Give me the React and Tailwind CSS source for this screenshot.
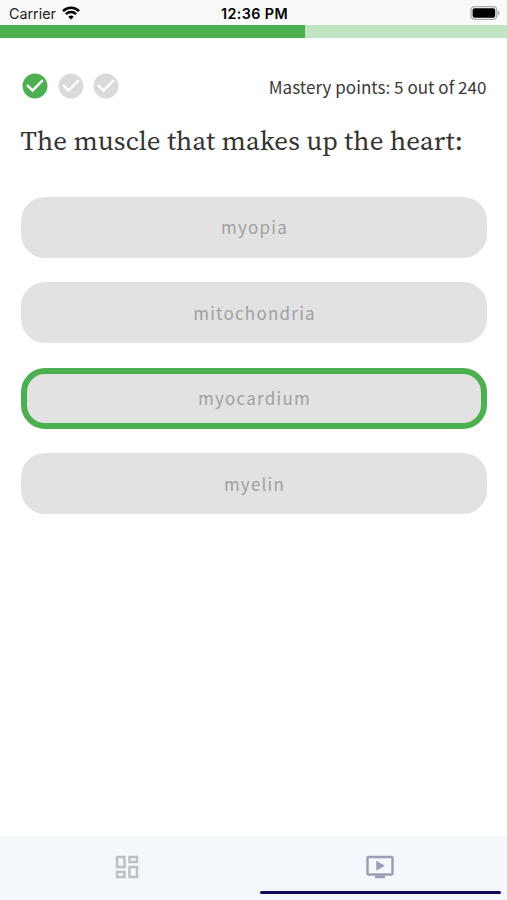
const answers = [
  { label: "myopia" },
  { label: "mitochondria" },
  { label: "myocardium", correct: true },
  { label: "myelin" },
];

function CheckCircle({ className }) {
  return (
    <svg viewBox="0 0 24 24" fill="currentColor" className={`h-[30px] w-[30px] ${className}`}>
      <path d="M12 2C6.48 2 2 6.48 2 12s4.48 10 10 10 10-4.48 10-10S17.52 2 12 2zm-2 15l-5-5 1.41-1.41L10 14.17l7.59-7.59L19 8l-9 9z" />
    </svg>
  );
}

function StatusBar() {
  return (
    <header className="grid h-[25px] grid-cols-3 items-center bg-[#f9f9f9] pl-[9px] pr-[7px] pt-[2px] font-['Inter','Liberation_Sans',sans-serif] text-black">
      <div className="flex items-center gap-[6px] text-[14.3px] leading-none">
        <span className="w-[47px] whitespace-nowrap pt-[2px] text-[#222]">Carrier</span>
        <svg viewBox="0 0 18 14" className="h-[14px] w-[18px]" fill="none" stroke="black" strokeWidth="2.5">
          <path d="M1 5.1a11.4 11.4 0 0 1 16 0" />
          <path d="M3.9 8.2a7.3 7.3 0 0 1 10.2 0" />
          <path d="M9 13.5 6.3 10.7a3.9 3.9 0 0 1 5.4 0z" fill="black" stroke="none" />
        </svg>
      </div>
      <div className="whitespace-nowrap pt-[2px] text-center text-[14.3px] font-semibold leading-none tracking-[0.4px]">12:36 PM</div>
      <div className="flex justify-end pb-[1px]">
        <svg viewBox="0 0 30 14" className="h-[14px] w-[30px]">
          <rect x="1" y="0.7" width="25.8" height="12.6" rx="3.6" fill="#f9f9f9" stroke="#aaa" strokeWidth="1.3" />
          <rect x="2.6" y="2.3" width="22.6" height="9.4" rx="2" fill="black" />
          <path d="M28 4.7v4.6c1-.4 1.6-1.3 1.6-2.3S29 5.1 28 4.7z" fill="#aaa" />
        </svg>
      </div>
    </header>
  );
}

export default function App() {
  return (
    <div className="flex h-[900px] w-[507px] flex-col overflow-hidden bg-white font-['Source_Sans_Pro','Noto_Sans_CJK_SC',sans-serif]">
      <StatusBar />
      <div className="h-[12.5px] bg-[#c0e4c1]">
        <div className="h-full w-[304.5px] bg-[#4caf50]" />
      </div>
      <main className="flex flex-1 flex-col px-[20.5px] pt-[34px]">
        <div className="flex h-[30px] items-center justify-between">
          <div className="-ml-[0.4px] -mt-[1px] flex gap-[5.5px]">
            <CheckCircle className="text-[#4caf50]" />
            <CheckCircle className="text-[#dadada]" />
            <CheckCircle className="text-[#dadada]" />
          </div>
          <span className="whitespace-nowrap text-[17px] leading-[24px] tracking-[0.03px] text-[#3a3a3a]">
            Mastery points: 5 out of 240
          </span>
        </div>
        <h1 className="mt-[21px] h-[36px] whitespace-nowrap font-['Source_Serif_Pro','Source_Serif_4','Noto_Serif_CJK_SC','Liberation_Serif',serif] text-[27px] leading-[36px] tracking-[0.13px] text-[#333]">
          The muscle that makes up the heart:
        </h1>
        <div className="mt-[38px] flex flex-col gap-[24.5px]">
          {answers.map(({ label, correct }) => (
            <button
              key={label}
              className={`flex h-[61px] items-center justify-center rounded-[24px] border-[6px] bg-[#e2e2e2] pl-[2px] text-[17px] leading-[24px] tracking-[1.23px] text-[#a0a0a0] ${correct ? "border-[#4caf50]" : "border-[#e2e2e2]"}`}
            >
              {label}
            </button>
          ))}
        </div>
      </main>
      <nav className="grid h-[64px] grid-cols-2 bg-[#f4f7fb]">
        <div className="flex justify-center pt-[16px]">
          <svg viewBox="0 0 24 24" fill="#bcbfc4" className="h-[30px] w-[30px]">
            <path d="M19 5v2h-4V5h4M9 5v6H5V5h4m10 8v6h-4v-6h4M9 17v2H5v-2h4M21 3h-8v6h8V3zM11 3H3v10h8V3zm10 8h-8v10h8V11zm-10 4H3v6h8v-6z" />
          </svg>
        </div>
        <div className="flex flex-col items-center justify-between pb-[6px] pl-[6px] pr-[6px] pt-[16px]">
          <svg viewBox="0 0 24 24" fill="#9c9eb8" className="h-[30px] w-[30px]">
            <path d="M21 3H3c-1.11 0-2 .89-2 2v12c0 1.1.89 2 2 2h5v2h8v-2h5c1.1 0 1.99-.9 1.99-2L23 5c0-1.11-.9-2-2-2zm0 14H3V5h18v12zm-5-6l-7 4V7z" />
          </svg>
          <div className="h-[3px] w-full rounded-full bg-[#100c5c]" />
        </div>
      </nav>
    </div>
  );
}
